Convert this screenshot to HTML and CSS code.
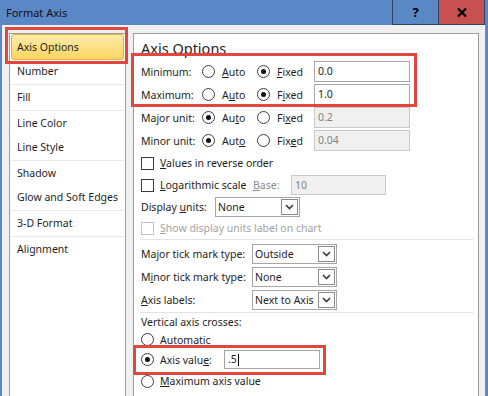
FILE: index.html
```html
<!DOCTYPE html>
<html>
  <head>
    <link rel="stylesheet" href="styles.css">
  </head>

  <body>
    <div class="window">
      <div class="titlebar">
        <div class="title">Format Axis</div>
        <div class="title-btn help">?</div>
        <div class="title-btn close">
          <svg width="10" height="9" viewBox="0 0 10 9"><path d="M1 0.5 L9 8.5 M9 0.5 L1 8.5" stroke="#000" stroke-width="2.2"/></svg>
        </div>
      </div>

      <div class="frame">
        <div class="nav">
          <div class="nav-item selected">Axis Options</div>
          <div class="nav-item">Number</div>
          <div class="nav-sep"></div>
          <div class="nav-item">Fill</div>
          <div class="nav-sep"></div>
          <div class="nav-item">Line Color</div>
          <div class="nav-item">Line Style</div>
          <div class="nav-sep"></div>
          <div class="nav-item">Shadow</div>
          <div class="nav-item">Glow and Soft Edges</div>
          <div class="nav-sep"></div>
          <div class="nav-item">3-D Format</div>
          <div class="nav-sep"></div>
          <div class="nav-item">Alignment</div>
        </div>

        <div class="pane">
          <div class="pane-title">Axis Options</div>

          <div class="bounds">
            <span>Minimum:</span>
            <span class="opt"><span class="radio"></span><span><u>A</u>uto</span></span>
            <span class="opt"><span class="radio on"></span><span><u>F</u>ixed</span></span>
            <span class="field">0.0</span>

            <span>Maximum:</span>
            <span class="opt"><span class="radio"></span><span>A<u>u</u>to</span></span>
            <span class="opt"><span class="radio on"></span><span>F<u>i</u>xed</span></span>
            <span class="field">1.0</span>

            <span>Major unit:</span>
            <span class="opt"><span class="radio on"></span><span>Au<u>t</u>o</span></span>
            <span class="opt"><span class="radio"></span><span>Fi<u>x</u>ed</span></span>
            <span class="field disabled">0.2</span>

            <span>Minor unit:</span>
            <span class="opt"><span class="radio on"></span><span>Aut<u>o</u></span></span>
            <span class="opt"><span class="radio"></span><span>Fix<u>e</u>d</span></span>
            <span class="field disabled">0.04</span>
          </div>

          <div class="line-row r-values">
            <span class="check"></span><span><u>V</u>alues in reverse order</span>
          </div>
          <div class="line-row r-log">
            <span class="check"></span><span class="log-label"><u>L</u>ogarithmic scale</span>
            <span class="base-label"><u>B</u>ase:</span>
            <span class="field disabled base-field">10</span>
          </div>
          <div class="line-row r-units">
            <span class="units-label">Display <u>u</u>nits:</span>
            <span class="select">
              <span class="select-text">None</span>
              <span class="select-btn"><svg width="9" height="6" viewBox="0 0 9 6"><path d="M1 1 L4.5 4.5 L8 1" fill="none" stroke="#3a3a3a" stroke-width="1.6"/></svg></span>
            </span>
          </div>
          <div class="line-row r-show">
            <span class="check"></span><span><u>S</u>how display units label on chart</span>
          </div>

          <div class="sep"></div>

          <div class="line-row r-tick">
            <span class="tick-label">Major tick mark type:</span>
            <span class="select">
              <span class="select-text">Outside</span>
              <span class="select-btn"><svg width="9" height="6" viewBox="0 0 9 6"><path d="M1 1 L4.5 4.5 L8 1" fill="none" stroke="#3a3a3a" stroke-width="1.6"/></svg></span>
            </span>
          </div>
          <div class="line-row r-tick">
            <span class="tick-label">M<u>i</u>nor tick mark type:</span>
            <span class="select">
              <span class="select-text">None</span>
              <span class="select-btn"><svg width="9" height="6" viewBox="0 0 9 6"><path d="M1 1 L4.5 4.5 L8 1" fill="none" stroke="#3a3a3a" stroke-width="1.6"/></svg></span>
            </span>
          </div>
          <div class="line-row r-tick">
            <span class="tick-label"><u>A</u>xis labels:</span>
            <span class="select">
              <span class="select-text">Next to Axis</span>
              <span class="select-btn"><svg width="9" height="6" viewBox="0 0 9 6"><path d="M1 1 L4.5 4.5 L8 1" fill="none" stroke="#3a3a3a" stroke-width="1.6"/></svg></span>
            </span>
          </div>

          <div class="sep sep-tight"></div>

          <div class="line-row r-head">Vertical axis crosses:</div>
          <div class="line-row r-auto">
            <span class="radio"></span><span>Auto<u>m</u>atic</span>
          </div>
          <div class="line-row r-value">
            <span class="radio on"></span><span class="value-label">Axis valu<u>e</u>:</span>
            <span class="field value-field">.5<span class="caret"></span></span>
          </div>
          <div class="line-row r-max">
            <span class="radio"></span><span><u>M</u>aximum axis value</span>
          </div>
        </div>
      </div>

      <!-- red callout boxes drawn over the dialog -->
      <div class="callout callout-nav"></div>
      <div class="callout callout-bounds"></div>
      <div class="callout callout-cross"></div>
    </div>
  </body>
</html>
```

FILE: styles.css
```css
body {
  margin: 0;
  font-family: "Noto Sans", "Open Sans", sans-serif;
  font-size: 10.5px;
  color: #1e1e1e;
}

.window {
  position: relative;
  width: 488px;
  height: 396px;
  overflow: hidden;
  box-sizing: border-box;
  background: #f0f0f0;
  border-left: 2px solid #5a87c6;
  border-right: 2px solid #5a87c6;
  display: flex;
  flex-direction: column;
}

.titlebar {
  flex: none;
  height: 25px;
  background: #5a87c6;
  display: flex;
}

.title {
  flex: 1;
  padding-left: 4px;
  font-size: 11px;
  line-height: 25px;
  color: #111;
}

.title-btn {
  width: 47px;
  box-sizing: border-box;
  border: 1px solid #2f4462;
  border-top: none;
  display: flex;
  align-items: center;
  justify-content: center;
  font-weight: bold;
  font-size: 13px;
  color: #000;
}

.help {
  background: #5a87c6;
}

.close {
  width: 46px;
  margin-right: 1px;
  border-left: none;
  background: #c75050;
}

.frame {
  flex: 1;
  min-height: 0;
  display: flex;
  gap: 7px;
  padding: 8px 6px 0 7px;
  border-right: 1px solid #8d8d8d;
}

/* left category list */
.nav {
  flex: none;
  width: 117px;
  box-sizing: border-box;
  background: #fff;
  border: 1px solid #9d9d9d;
  border-bottom: none;
  padding-top: 1px;
}

.nav-item {
  height: 24px;
  line-height: 24px;
  margin: 0 1px;
  padding-left: 5px;
  border-left: 1px solid transparent;
  border-right: 1px solid transparent;
}

.nav-item.selected {
  margin: -1px 1px;
  border: 1px solid #e1b044;
  border-radius: 3px;
  background: linear-gradient(#fdeba8, #fbd564);
}

.nav-sep {
  height: 1px;
  margin: 1px 1px 0;
  background: #e8e8e8;
}

/* right settings pane */
.pane {
  flex: 1;
  background: #fff;
  border: 1px solid #9d9d9d;
  border-bottom: none;
  padding-left: 7px;
}

.pane-title {
  height: 26px;
  box-sizing: border-box;
  padding-top: 3px;
  line-height: 22px;
  font-size: 14.5px;
  color: #262626;
}

.bounds {
  display: grid;
  grid-template-columns: 61px 55px 57px 96px;
  grid-auto-rows: 23px;
  align-items: center;
}

.opt {
  display: flex;
  align-items: center;
  gap: 7px;
}

.radio {
  flex: none;
  width: 13px;
  height: 13px;
  box-sizing: border-box;
  border: 1px solid #3c3c3c;
  border-radius: 50%;
  background: #fff;
  display: inline-flex;
  align-items: center;
  justify-content: center;
}

.radio.on::after {
  content: "";
  width: 5px;
  height: 5px;
  border-radius: 50%;
  background: #111;
}

.check {
  flex: none;
  width: 13px;
  height: 13px;
  box-sizing: border-box;
  border: 1px solid #3c3c3c;
  background: #fff;
}

.field {
  height: 21px;
  box-sizing: border-box;
  border: 1px solid #a5a5a5;
  background: #fff;
  padding-left: 3px;
  line-height: 19px;
}

.field.disabled {
  background: #f0f0f0;
  border-color: #c9c9c9;
  color: #838383;
}

.line-row {
  display: flex;
  align-items: center;
}

.line-row > .check,
.line-row > .radio {
  margin-right: 6px;
}

.r-values,
.r-log,
.r-units {
  height: 22px;
}

.log-label {
  width: 93px;
}

.base-label {
  width: 38px;
  color: #8c8c8c;
}

.base-field {
  width: 95px;
  height: 20px;
  line-height: 18px;
}

.units-label {
  width: 74px;
}

.select {
  display: flex;
  width: 85px;
  height: 20px;
  box-sizing: border-box;
  border: 1px solid #a5a5a5;
  background: #fff;
}

.select-text {
  flex: 1;
  padding-left: 2px;
  line-height: 18px;
}

.select-btn {
  width: 17px;
  margin: 1px;
  box-sizing: border-box;
  border: 1px solid #8a8a8a;
  display: flex;
  align-items: center;
  justify-content: center;
}

.r-show {
  height: 20px;
  color: #a3a3a3;
}

.r-show .check {
  border-color: #c4c4c4;
}

.sep {
  height: 1px;
  margin: 1px 5px 2px -1px;
  background: #e3e3e3;
}

.sep.sep-tight {
  margin-bottom: 0;
}

.r-tick {
  height: 23px;
}

.tick-label {
  width: 111px;
}

.r-head {
  height: 18px;
}

.r-auto {
  height: 17px;
}

.r-value {
  height: 23px;
}

.value-label {
  width: 64px;
}

.value-field {
  width: 96px;
  height: 19px;
  line-height: 17px;
}

.caret {
  display: inline-block;
  width: 1px;
  height: 12px;
  margin-left: 1px;
  background: #000;
  vertical-align: middle;
}

.r-max {
  height: 20px;
}

.callout {
  position: absolute;
  box-sizing: border-box;
  border: 3px solid #e2463d;
}

.callout-nav {
  left: 3px;
  top: 27px;
  width: 123px;
  height: 37px;
}

.callout-bounds {
  left: 129px;
  top: 53px;
  width: 286px;
  height: 54px;
}

.callout-cross {
  left: 131px;
  top: 345px;
  width: 193px;
  height: 30px;
}
```
